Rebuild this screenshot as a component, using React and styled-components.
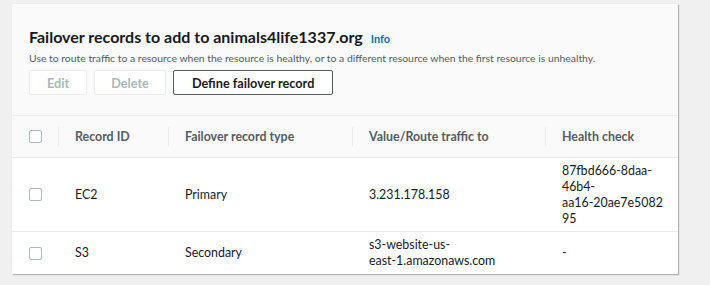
import React from "react";
import styled, { createGlobalStyle } from "styled-components";

const GlobalStyle = createGlobalStyle`
  html, body {
    margin: 0;
    padding: 0;
    background: #f0f0f0;
    font-family: "Lato", "Noto Sans", Arial, sans-serif;
    -webkit-font-smoothing: antialiased;
  }
`;

const Page = styled.div`
  width: 710px;
  height: 285px;
  padding: 4px 0 0 12px;
  box-sizing: border-box;
`;

const Panel = styled.section`
  width: 666px;
  background: #fafafa;
  box-shadow: 1px 1px 1px rgba(0, 0, 0, 0.25), 0 0 1px rgba(0, 0, 0, 0.08);
`;

const Header = styled.div`
  padding: 23px 17px 20px 17px;
`;

const Title = styled.h2`
  margin: 0;
  font-size: 16px;
  line-height: 20px;
  font-weight: 700;
  color: #16191f;
  display: flex;
  align-items: baseline;
  gap: 8px;
`;

const InfoLink = styled.a`
  font-size: 11px;
  font-weight: 700;
  color: #0073bb;
  text-decoration: none;
`;

const Description = styled.p`
  margin: 1px 0 0;
  font-size: 10.4px;
  line-height: 16px;
  color: #545b64;
`;

const Actions = styled.div`
  display: flex;
  gap: 7px;
  margin-top: 4px;
`;

const Button = styled.button`
  height: 25px;
  padding: 0 ${(p) => p.$pad}px;
  background: #fff;
  border: 1px solid ${(p) => (p.disabled ? "#eaeded" : "#545b64")};
  border-radius: 2px;
  font-family: inherit;
  font-size: 12.7px;
  font-weight: 700;
  color: ${(p) => (p.disabled ? "#aab7b8" : "#16191f")};
  cursor: ${(p) => (p.disabled ? "default" : "pointer")};
`;

const Table = styled.table`
  width: 100%;
  border-collapse: collapse;
  table-layout: fixed;
  border-top: 1px solid #eaeded;
`;

const HeadCell = styled.th`
  position: relative;
  height: 41px;
  padding: 0 14px 0 17px;
  text-align: left;
  font-size: 12.4px;
  font-weight: 700;
  color: #545b64;
  background: #fafafa;
  border-bottom: 1px solid #eaeded;

  &:not(:first-child)::before {
    content: "";
    position: absolute;
    left: 0;
    top: 11px;
    bottom: 11px;
    width: 1px;
    background: #eaeded;
  }
`;

const Row = styled.tr`
  background: #fff;
  border-bottom: 1px solid #eaeded;

  &:last-child {
    border-bottom: none;
  }
`;

const Cell = styled.td`
  height: ${(p) => p.$h}px;
  padding: 0 14px 0 17px;
  font-size: 12.4px;
  line-height: 16px;
  color: #16191f;
  vertical-align: middle;
`;

const Line = styled.span`
  display: block;
  white-space: nowrap;
`;

const Check = styled.span`
  display: block;
  width: 11px;
  height: 11px;
  border: 1px solid #aab7b8;
  border-radius: 2px;
  background: #fff;
`;

const records = [
  {
    id: "EC2",
    type: "Primary",
    value: ["3.231.178.158"],
    health: ["87fbd666-8daa-", "46b4-", "aa16-20ae7e5082", "95"],
    h: 73,
  },
  {
    id: "S3",
    type: "Secondary",
    value: ["s3-website-us-", "east-1.amazonaws.com"],
    health: ["-"],
    h: 42,
  },
];

export default function App() {
  return (
    <>
      <GlobalStyle />
      <Page>
        <Panel>
          <Header>
            <Title>
              Failover records to add to animals4life1337.org
              <InfoLink href="#">Info</InfoLink>
            </Title>
            <Description>
              Use to route traffic to a resource when the resource is healthy, or
              to a different resource when the first resource is unhealthy.
            </Description>
            <Actions>
              <Button disabled $pad={17}>Edit</Button>
              <Button disabled $pad={16}>Delete</Button>
              <Button $pad={18}>Define failover record</Button>
            </Actions>
          </Header>
          <Table>
            <colgroup>
              <col style={{ width: 46 }} />
              <col style={{ width: 110 }} />
              <col style={{ width: 184 }} />
              <col style={{ width: 193 }} />
              <col />
            </colgroup>
            <thead>
              <tr>
                <HeadCell>
                  <Check />
                </HeadCell>
                <HeadCell>Record ID</HeadCell>
                <HeadCell>Failover record type</HeadCell>
                <HeadCell>Value/Route traffic to</HeadCell>
                <HeadCell>Health check</HeadCell>
              </tr>
            </thead>
            <tbody>
              {records.map((r) => (
                <Row key={r.id}>
                  <Cell $h={r.h}>
                    <Check />
                  </Cell>
                  <Cell $h={r.h}>{r.id}</Cell>
                  <Cell $h={r.h}>{r.type}</Cell>
                  <Cell $h={r.h}>
                    {r.value.map((l) => (
                      <Line key={l}>{l}</Line>
                    ))}
                  </Cell>
                  <Cell $h={r.h}>
                    {r.health.map((l) => (
                      <Line key={l}>{l}</Line>
                    ))}
                  </Cell>
                </Row>
              ))}
            </tbody>
          </Table>
        </Panel>
      </Page>
    </>
  );
}
